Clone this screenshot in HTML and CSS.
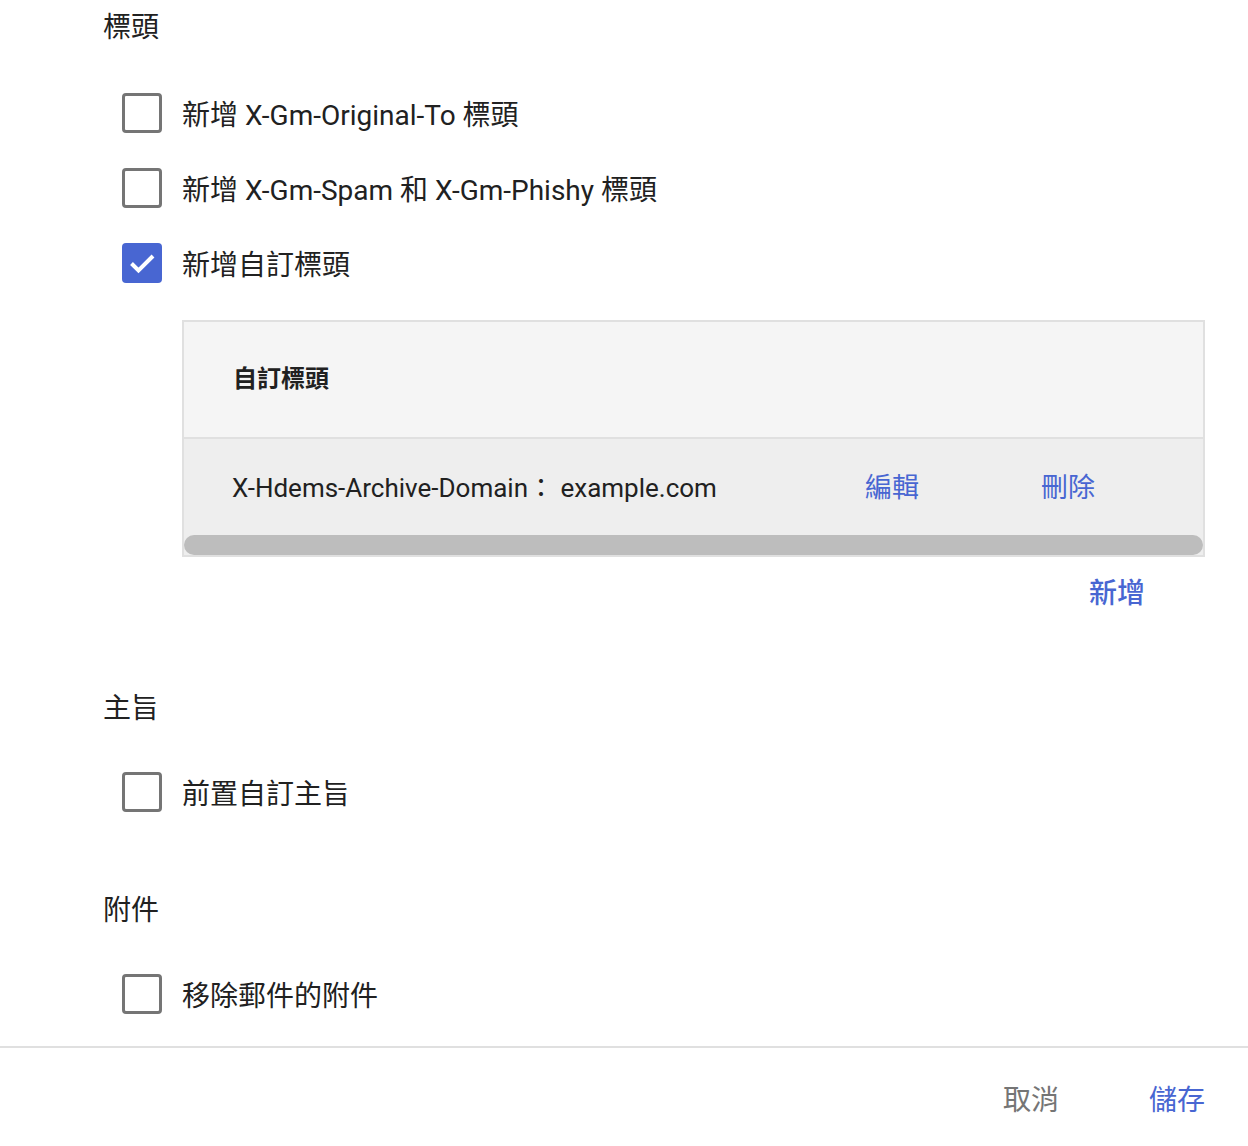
FILE: index.html
```html
<!doctype html>
<html>
  <head>
    <title>標頭設定</title>
    <link rel="stylesheet" href="styles.css">
  </head>
  <body>
    <div class="content">
      <div class="section">
        <div class="section-title">標頭</div>
        <div class="options">
          <label class="option">
            <span class="box"></span>
            <span class="label">新增 X-Gm-Original-To 標頭</span>
          </label>
          <label class="option">
            <span class="box"></span>
            <span class="label">新增 X-Gm-Spam 和 X-Gm-Phishy 標頭</span>
          </label>
          <label class="option">
            <span class="box checked">
              <svg width="40" height="40" viewBox="0 0 40 40"><path d="M9.5 20.5 L16.5 27.5 L31 13" fill="none" stroke="#fff" stroke-width="4"/></svg>
            </span>
            <span class="label">新增自訂標頭</span>
          </label>
        </div>

        <div class="header-table">
          <div class="table-head">自訂標頭</div>
          <div class="table-row">
            <span class="header-value">X-Hdems-Archive-Domain： example.com</span>
            <span class="link edit">編輯</span>
            <span class="link">刪除</span>
          </div>
          <div class="scrollbar"></div>
        </div>
        <div class="add-row">
          <span class="link add">新增</span>
        </div>
      </div>

      <div class="section">
        <div class="section-title">主旨</div>
        <div class="options">
          <label class="option">
            <span class="box"></span>
            <span class="label">前置自訂主旨</span>
          </label>
        </div>
      </div>

      <div class="section">
        <div class="section-title">附件</div>
        <div class="options">
          <label class="option">
            <span class="box"></span>
            <span class="label">移除郵件的附件</span>
          </label>
        </div>
      </div>
    </div>

    <div class="footer">
      <span class="btn cancel">取消</span>
      <span class="btn save">儲存</span>
    </div>
  </body>
</html>
```

FILE: styles.css
```css
body {
  margin: 0;
  padding: 0;
  background: #fff;
  color: #212121;
  font-family: Roboto, "Noto Sans CJK TC", sans-serif;
  font-size: 28px;
}

.content {
  padding-left: 103px;
  padding-right: 43px;
  padding-bottom: 15px;
}

.section + .section {
  margin-top: 54px;
}

.section-title {
  height: 56px;
  line-height: 56px;
}

.options {
  margin-top: 19px;
  padding-left: 19px;
}

.section + .section .options {
  margin-top: 17px;
}

.option {
  display: flex;
  align-items: center;
  height: 75px;
}

.box {
  width: 40px;
  height: 40px;
  box-sizing: border-box;
  border: 3px solid #757575;
  border-radius: 4px;
  margin-right: 20px;
  flex-shrink: 0;
}

.box.checked {
  border: none;
  background: #4866d2;
}

.box svg {
  display: block;
}

.header-table {
  margin-top: 20px;
  margin-left: 79px;
  border: 2px solid #e0e0e0;
  background: #eeeeee;
}

.table-head {
  height: 115px;
  line-height: 115px;
  padding-left: 49px;
  background: #f5f5f5;
  border-bottom: 2px solid #e0e0e0;
  font-size: 24px;
  font-weight: bold;
}

.table-row {
  display: flex;
  align-items: center;
  height: 92px;
  padding-bottom: 4px;
  padding-left: 48px;
  font-size: 26px;
}

.header-value {
  width: 633px;
}

.link {
  color: #4866d2;
}

.table-row .link {
  font-size: 27px;
}

.edit {
  width: 176px;
}

.scrollbar {
  height: 20px;
  background: #bdbdbd;
  border-radius: 10px;
}

.add-row {
  display: flex;
  justify-content: flex-end;
  height: 70px;
  line-height: 74px;
  padding-right: 60px;
}

.add {
  font-weight: 500;
}

.footer {
  display: flex;
  justify-content: flex-end;
  align-items: center;
  gap: 90px;
  height: 100px;
  padding-right: 43px;
  border-top: 2px solid #e0e0e0;
}

.btn.cancel {
  color: #757575;
}

.btn.save {
  color: #4866d2;
}
```
